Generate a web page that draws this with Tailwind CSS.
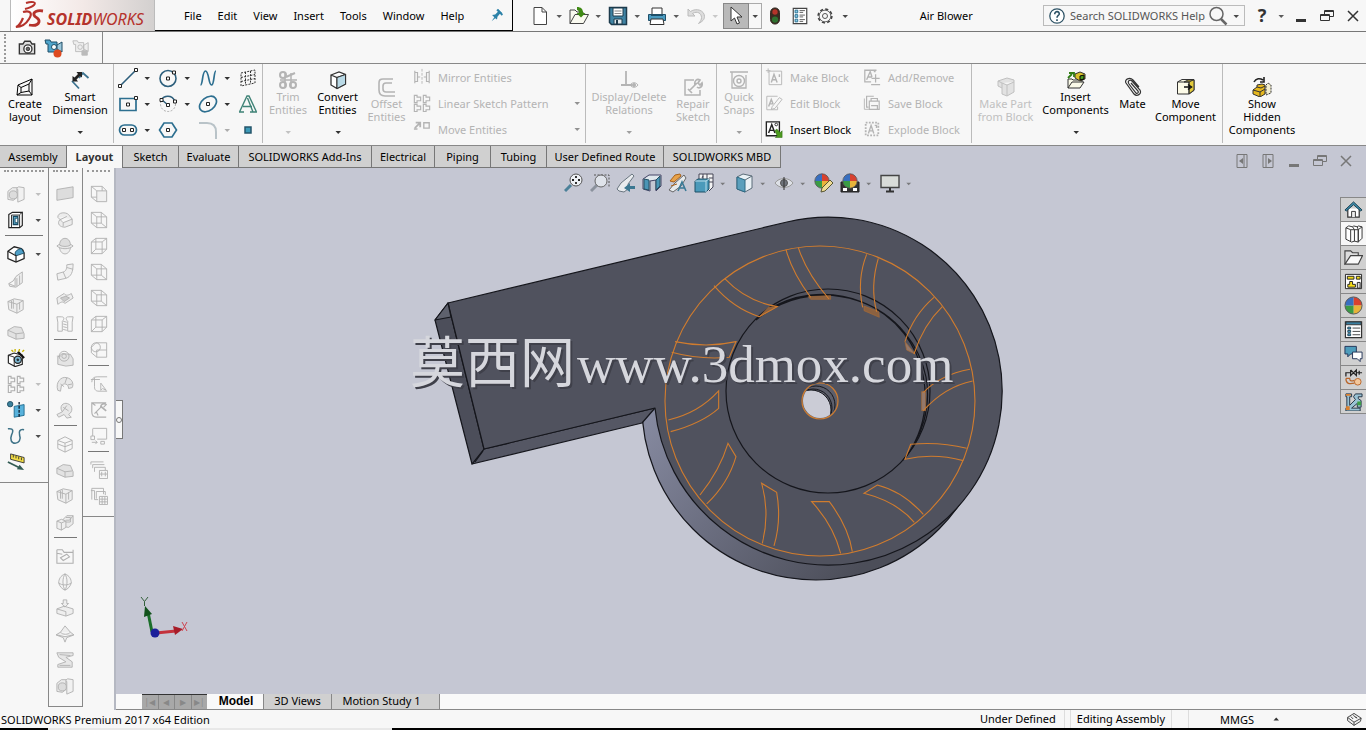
<!DOCTYPE html>
<html lang="en">
<head>
    <meta charset="UTF-8">
    <meta name="viewport" content="width=device-width, initial-scale=1.0">
    <title>Air Blower - SOLIDWORKS</title>
    <script src="https://cdn.jsdelivr.net/npm/@tailwindcss/browser@4"></script>
</head>

<body class="flex h-screen flex-col overflow-hidden bg-[#f7f7f7] font-['Noto_Sans','Open_Sans',sans-serif] text-[11px] leading-[13px] text-[#1c1c1c]">

<!-- icon sprite, every symbol is 20x20 -->
<svg class="hidden">
    <defs>
        <radialGradient id="g-ball"><stop offset="0" stop-color="#fff"/><stop offset="1" stop-color="#fff" stop-opacity="0"/></radialGradient>
    </defs>
    <symbol id="down" viewBox="0 0 8 8"><path d="M1.500 3h5.500L4.200 6z" fill="currentColor" fill-opacity=".8" stroke="none"/></symbol>
    <symbol id="up" viewBox="0 0 8 8"><path d="M1.500 5.500h5.500L4.200 2.500z" fill="currentColor" fill-opacity=".8" stroke="none"/></symbol>
    <symbol id="pin" viewBox="0 0 20 20"><path d="M11 3l5 5-2 1-1 0-2.500 3-.5 3-2-1.500L4 17l3-4.500L4.500 10l3.500-.5 3-3z" fill="#2c82a8" stroke="none"/><path d="M10 4l6 6" stroke="#2c82a8" stroke-width="2"/></symbol>
    <symbol id="new" viewBox="0 0 20 20"><path d="M4 1.500h8l4.500 4.500v12.500H4z" fill="#fff" stroke="#444"/><path d="M12 1.500V6h4.500" stroke="#444"/></symbol>
    <symbol id="open" viewBox="0 0 20 20"><path d="M1 17.500V4h5l2 2h6v3M1 17.500l5-9h13.500l-5 9z" fill="#fafaf0" stroke="#444"/><path d="M8 1c4 0 6 2 6 6h2.500L12 11.500 7.500 7H10c0-2-1-3-2-3z" fill="#3f8a14" stroke="none"/></symbol>
    <symbol id="save" viewBox="0 0 20 20"><path d="M1.500 1.500h17v17h-15l-2-2z" fill="#3f83a3" stroke="#1d3b4c" stroke-width="1.500"/><path d="M5 2h10v8H5z" fill="#fff" stroke="#1d3b4c"/><path d="M6.500 5h7M6.500 7.500h7" stroke="#888"/><path d="M6 13h8v5H6z" fill="#dfe8ec" stroke="#1d3b4c"/><path d="M8 14h2v4H8z" fill="#1d3b4c" stroke="none"/></symbol>
    <symbol id="print" viewBox="0 0 20 20"><path d="M5 2h10v7H5z" fill="#fff" stroke="#333"/><path d="M1.500 8.500h17v6h-17z" fill="#4b9bc0" stroke="#1f4f68"/><path d="M4 8h12v2H4z" fill="#1f4f68" stroke="none"/><path d="M4 13h12l1 5.500H3z" fill="#fff" stroke="#333"/></symbol>
    <symbol id="undo" viewBox="0 0 20 20"><path d="M2 3v7h7L6.500 7.500c5-3 9 0 9 4 0 2-1 4-3 6 4-2 6-4 6-7 0-6-8-9-14-5z" fill="#ddd" stroke="#bbb"/></symbol>
    <symbol id="cursor" viewBox="0 0 20 20"><path d="M5 1v14l3.500-3 2.500 6 2.500-1-2.500-6H16z" fill="#fff" stroke="#333"/></symbol>
    <symbol id="traffic" viewBox="0 0 20 20"><rect x="5" y="1" width="10" height="18" rx="5" fill="#3b2a20" stroke="#2a2018"/><circle cx="10" cy="5.500" r="3" fill="#b5342a" stroke="none"/><circle cx="10" cy="14" r="3.500" fill="#2f7230" stroke="none"/></symbol>
    <symbol id="list" viewBox="0 0 20 20"><path d="M2.500 1.500h15v17h-15z" fill="#fff" stroke="#444" stroke-width="1.300"/><path d="M9.500 4h6M9.500 6h4M9.500 9h6M9.500 11h4M9.500 14h6M9.500 16h4" stroke="#555"/><path d="M4.500 3.500h3v3h-3zM4.500 8.500h3v3h-3zM4.500 13.500h3v3h-3z" fill="#8fd0ea" stroke="#1f6a8c"/></symbol>
    <symbol id="gear" viewBox="0 0 20 20"><circle cx="10" cy="10" r="7.500" stroke="#444" stroke-dasharray="3.400 2.500" stroke-width="2"/><circle cx="10" cy="10" r="6.500" fill="#f7f7f7" stroke="#555"/><circle cx="10" cy="10" r="2.800" stroke="#444"/></symbol>
    <symbol id="help" viewBox="0 0 20 20"><circle cx="10" cy="10" r="8" fill="#fff" stroke="#2d5265" stroke-width="1.400"/><path d="M7.500 8c0-4 5.500-3.500 5 0-.3 1.500-2.500 1.500-2.500 4M10 13.500v2" stroke="#2d5265" stroke-width="1.800"/></symbol>
    <symbol id="search" viewBox="0 0 20 20"><circle cx="8.500" cy="8" r="6.500" stroke="#666" stroke-width="1.500"/><path d="M13 13l5.500 5.500" stroke="#666" stroke-width="2.500"/></symbol>
    <symbol id="minimise" viewBox="0 0 20 20"><path d="M5 14.500h10" stroke-width="3"/></symbol>
    <symbol id="restore" viewBox="0 0 20 20"><path d="M3.500 8.500h9v6h-9zM7.500 8V4.500h9v6H13M3.500 9.500h9M7.500 5.500h9"/></symbol>
    <symbol id="close" viewBox="0 0 20 20"><path d="M5 5l10 10M15 5L5 15" stroke-width="1.500"/></symbol>
    <symbol id="camera" viewBox="0 0 20 20"><path d="M1.500 5.500h4l2-3h6l2 3h3v11h-17z" fill="#ddd" stroke="#333" stroke-width="1.500"/><circle cx="11" cy="11" r="4.500" fill="#fff" stroke="#333" stroke-width="1.500"/><circle cx="11" cy="11" r="2" fill="#666" stroke="#333"/></symbol>
    <symbol id="record" viewBox="0 0 20 20"><path d="M1 2h5l1 2h6v10H4V6H2z" fill="#4fa5cc" stroke="#1e4d66"/><path d="M13 7l5-3v10l-5-3z" fill="#9cc8dc" stroke="#1e4d66"/><circle cx="10" cy="9" r="2.500" fill="#fff" stroke="#1e4d66"/><circle cx="13.500" cy="15.500" r="4" fill="#dd4a20" stroke="none"/></symbol>
    <symbol id="stop" viewBox="0 0 20 20"><path d="M1 2h5l1 2h6v10H4V6H2zM13 7l5-3v10l-5-3z" fill="#eee"/><circle cx="9" cy="9" r="2.500"/><path d="M11 13h6v5h-6z" fill="currentColor"/></symbol>

    <!-- ribbon -->
    <symbol id="layout" viewBox="0 0 20 20"><path d="M3 8l14-6v16H2zM6 10.500L14 7v7l-8 1.500zM3 8l3 2.500M17 2l-3 5M17 18l-3-4M2 18l4-2.500"/></symbol>
    <symbol id="dimension" viewBox="0 0 20 20"><path d="M9 8l4-5 5.500 5M2 11l7 7.500" stroke="#3c7390" stroke-width="1.800"/><path d="M2.500 11.500V6l2 1.500L8 4 6.500 2H12v5.500L10 6l-3.500 3.500L8 11.500z" fill="#222" stroke="none"/></symbol>
    <symbol id="line" viewBox="0 0 20 20"><path d="M3 17L17 3" stroke="#2d5f7c" stroke-width="1.600"/><path d="M.5 16.500h3v3h-3zM16.500.5h3v3h-3z" fill="#fff" stroke="#222"/></symbol>
    <symbol id="circle" viewBox="0 0 20 20"><circle cx="10" cy="10.500" r="8" stroke="#2d5f7c" stroke-width="1.600"/><path d="M8.500 9h3v3h-3zM14.500 3h3v3h-3z" fill="#fff" stroke="#222"/></symbol>
    <symbol id="spline" viewBox="0 0 20 20"><path d="M2.500 17C5 17 4 3 7.500 3s3 14 6 14 2-14 4.500-14" stroke="#2d6f90" stroke-width="1.700"/></symbol>
    <symbol id="grid" viewBox="0 0 20 20"><path d="M3 5l14-3v13L3 18zM7.500 4v13M12.500 3v13M3 9.500l14-3M3 13.500l14-3" stroke="#333" stroke-dasharray="2 1.200"/></symbol>
    <symbol id="rect" viewBox="0 0 20 20"><path d="M2 4.500h16v12H2z" stroke="#2d6f90" stroke-width="1.700"/><path d="M8.500 9h3v3h-3zM16.500 2.500h3v3h-3z" fill="#fff" stroke="#222"/></symbol>
    <symbol id="arc" viewBox="0 0 20 20"><circle cx="10" cy="10" r="7.500" stroke="#aaa" stroke-dasharray="2 1.500"/><path d="M3.500 6C6 1 14 1 16.500 6.500M4 6l6 5" stroke="#2d5f7c" stroke-width="1.500"/><path d="M2 4.500h3v3H2zM15.500 6h3v3h-3zM8.500 9.500h3v3h-3z" fill="#fff" stroke="#222"/></symbol>
    <symbol id="ellipse" viewBox="0 0 20 20"><ellipse cx="10" cy="10" rx="9.500" ry="6.500" transform="rotate(-38 10 10)" stroke="#2d6f90" stroke-width="1.700"/><path d="M8.500 8.500h3v3h-3z" fill="#fff" stroke="#222"/></symbol>
    <symbol id="sketchtext" viewBox="0 0 20 20"><path d="M1.500 18L9 2h2l7.500 16M1 18h5M12 18h7M5 12.500h9M9.500 4L15 18" stroke="#3f8377" stroke-width="1.400"/></symbol>
    <symbol id="slot" viewBox="0 0 20 20"><rect x="1.500" y="5" width="17" height="10" rx="5" stroke="#2d6f90" stroke-width="1.700"/><path d="M4.500 8.500h3v3h-3zM12.500 8.500h3v3h-3z" fill="#fff" stroke="#222"/></symbol>
    <symbol id="polygon" viewBox="0 0 20 20"><path d="M6 3h8l4.500 7-4.500 7H6l-4.500-7z" stroke="#2d6f90" stroke-width="1.700"/><path d="M8.500 8.500h3v3h-3z" fill="#fff" stroke="#222"/></symbol>
    <symbol id="fillet" viewBox="0 0 20 20"><path d="M1 3h8c6 0 9 3 9 9v7" stroke="#b9c3c8" stroke-width="2"/></symbol>
    <symbol id="point" viewBox="0 0 20 20"><path d="M7 7h6v6H7z" fill="#3c9ab8" stroke="#24566b" stroke-width="1.500"/></symbol>
    <symbol id="trim" viewBox="0 0 20 20"><path d="M7 3v14M13 3v14M2 10h17" stroke-width="1.500"/><circle cx="5" cy="5" r="3" stroke-width="2"/><circle cx="5" cy="15" r="3" stroke-width="2"/><circle cx="15" cy="15" r="3" stroke-width="2"/><path d="M8 7l9-4" stroke-width="2"/></symbol>
    <symbol id="convert" viewBox="0 0 20 20"><path d="M3 5l8-3 6.500 2.500V14L9 18.500 3 15zM3 5l6 2.500L17.500 4.500M9 7.500v11" fill="#fff" stroke="#333" stroke-width="1.300"/><path d="M9 7.500l8.500-3V14L9 18.500z" fill="#b9d9e6" stroke="#333"/></symbol>
    <symbol id="offset" viewBox="0 0 20 20"><path d="M16 2H6C3 2 2 3 2 6v7c0 4 2 6 6 6h10M15 6h-6c-2 0-3 1-3 3v3c0 2 1 3 3 3h9" stroke-width="1.600"/></symbol>
    <symbol id="mirror" viewBox="0 0 20 20"><path d="M10 1v18" stroke-dasharray="3 1.500"/><path d="M2 3v14M2 5h3v10H2M5 10h3M18 3v14M18 5h-3v10h3M15 10h-3" stroke-width="1.300"/></symbol>
    <symbol id="pattern" viewBox="0 0 20 20"><path d="M1.500 1.500h3v2h4v4h-4v2h-3zM11.500 1.500h3v2h4v4h-4v2h-3zM1.500 11.500h3v2h4v4h-4v2h-3zM11.500 11.500h3v2h4v4h-4v2h-3z" stroke-width="1.300"/></symbol>
    <symbol id="move" viewBox="0 0 20 20"><path d="M2 9l6-6M3 3h5v5" stroke-width="2"/><path d="M12 3h6v6h-6zM1 10h4" stroke-width="1.500"/></symbol>
    <symbol id="relations" viewBox="0 0 20 20"><path d="M7 1v14M2 15h11" stroke-width="1.800"/><path d="M11 15c2-3 6-3 8 0-2 3-6 3-8 0z"/><circle cx="15" cy="15" r="1.500" fill="currentColor"/></symbol>
    <symbol id="repair" viewBox="0 0 20 20"><path d="M11 3H2v15h15v-5" stroke-width="1.500"/><path d="M6 14l8-8M12 8c-1-4 2-7 5-5l-2 3 2 2 2-2c1 4-3 6-5 4M5 12l4 4" stroke-width="1.700"/></symbol>
    <symbol id="snaps" viewBox="0 0 20 20"><path d="M1 2h18M3 2v16h14V5" stroke-width="1.300"/><circle cx="10" cy="11" r="5.500" stroke-width="1.400"/><circle cx="10" cy="11" r="2" stroke-width="1.400"/></symbol>
    <symbol id="blockA" viewBox="0 0 20 20"><path d="M4.500 3.500h14v15h-14zM1 3h5M3.500 .5v5"/><path d="M7 16l3-9 3.500 9M8 13h4.500M16 7v3" stroke-width="1.600"/></symbol>
    <symbol id="blockEdit" viewBox="0 0 20 20"><path d="M14 2.500H2v15h12V14M8 14l8-10 3 2-8 10-4 1z"/><path d="M4 14l3-8 2 5M5 11h4" stroke-width="1.600"/></symbol>
    <symbol id="blockInsert" viewBox="0 0 20 20"><path d="M1.500 2h14.500v15.500H1.500z" fill="#fff" stroke="#222" stroke-width="1.500"/><path d="M4 14.500L7.500 5l3.500 9.500M5 11.500h5" stroke="#222" stroke-width="1.600"/><circle cx="12.500" cy="5" r="1.500" stroke="#222"/><path d="M11 12l2-2 4 4 2-2v7.500h-7.500l2-2z" fill="#4c9a1e" stroke="#2f6a12" stroke-width=".6"/></symbol>
    <symbol id="blockAdd" viewBox="0 0 20 20"><path d="M15 2.500H2v13h7M14 7v9M9.500 11.500h9M9 18.500h10" stroke-width="1.400"/><path d="M4 13l4-9 2 6M5.500 10H10M12 4h2" stroke-width="1.500"/></symbol>
    <symbol id="blockSave" viewBox="0 0 20 20"><path d="M12 2.500H4v12h2M7 8h11v9H7zM9 8V5h7v3M9 13h7v4" stroke-width="1.300"/><path d="M1.500 5v12h5"/></symbol>
    <symbol id="blockExplode" viewBox="0 0 20 20"><path d="M3 3h14v14H3z" stroke-dasharray="2 1.500" stroke-width="2"/><path d="M6 15l3-9 3 9M7 12h4M13 6h2v3" stroke-width="1.500"/></symbol>
    <symbol id="makepart" viewBox="0 0 20 20"><path d="M2 4l9-3 7 2v12l-7 4-5-2v-6L2 9zM6 6l5 2 7-3M11 8v11M2 4l4 2v5" fill="#e2e2e2"/></symbol>
    <symbol id="insertcomp" viewBox="0 0 20 20"><path d="M2 18V9h4l1 1h9v2M2 18l4-6h12l-4 6z" fill="#fafae8" stroke="#333"/><path d="M9 4l5-2 5 2v5l-5 2-5-3z" fill="#d9bf2c" stroke="#333"/><path d="M14 6l4-1v4l-4 1z" fill="#4c9a1e"/><path d="M2 8l4-4M3 3h5v4" stroke="#2f7d14" stroke-width="1.800"/></symbol>
    <symbol id="mate" viewBox="0 0 20 20"><path d="M16 10L10 3C7 0 1 2 3 6l8 11c3 3 8 0 6-4L9 4C7 2 4 4 6 7l7 9c1 1 3 0 2-2L8 6" stroke="#333" stroke-width="1.200"/></symbol>
    <symbol id="movecomp" viewBox="0 0 20 20"><path d="M1.500 5L6 2.500h12v11L13 17H1.500z" fill="#fdfbe8" stroke="#333"/><path d="M8 5l4-2h6v10l-5 4V5z" fill="#e3cb3c" stroke="#333"/><path d="M1.500 5H13v12M13 5l5-2.500" stroke="#333"/><path d="M8 10h6M12 7.500l3.500 2.500-3.500 2.500" stroke="#111" stroke-width="1.500"/></symbol>
    <symbol id="showhidden" viewBox="0 0 20 20"><path d="M1 13l4-3V8l5-1 3 1v9l-5 3-7-3z" fill="#e6b81e" stroke="#333"/><path d="M1 13l7 2 5-3M8 15v5M5 10l4 1 4-2" stroke="#333"/><path d="M14 8l2-2 3 2v8l-5 2z" fill="#f2eecf" stroke="#333" stroke-dasharray="2 1"/><path d="M2 5c2-4 6-4 9-2M12 0v5H8" stroke="#222" stroke-width="1.600"/></symbol>

    <!-- side bars -->
    <symbol id="boxround" viewBox="0 0 20 20"><path d="M10 4l3-2 6 1v13l-7 3V5z" fill="#f1f1f1"/><path d="M1 7l5-4h5v11l-4 3-6-1z" fill="#ebebeb"/><circle cx="7" cy="11" r="4.500" fill="#dcdcdc"/></symbol>
    <symbol id="cutbox" viewBox="0 0 20 20"><path d="M2 4l4-2.500h11V16l-3 2.500H2z" fill="#fff" stroke="#222" stroke-width="1.300"/><path d="M5 4.500h9v14M14 4l3-2.500M5 4.500V18" stroke="#222"/><path d="M7 6h5v9H7z" fill="#5fb1d6" stroke="#17475e" stroke-width="1.400"/><path d="M9 8h3v5H9z" fill="#fff" stroke="#17475e"/></symbol>
    <symbol id="filletbox" viewBox="0 0 20 20"><path d="M1 7l7-5 8 2c2 1 2.500 3 3 5v6L10 19l-9-4z" fill="#fff" stroke="#222" stroke-width="1.400"/><path d="M9 10c0-3 2-5 7-6l3 5-9 3z" fill="#4fa0c8" stroke="#17475e"/><path d="M1 7l9 5v7" stroke="#222" stroke-width="1.300"/></symbol>
    <symbol id="rib" viewBox="0 0 20 20"><path d="M2 14l5-3 3-5 7-5v12l-7 5-7-1zM11 8v9M14 5v10M2 14l7 3V8" fill="#eee"/></symbol>
    <symbol id="draft" viewBox="0 0 20 20"><path d="M1 5l7-3 10 2v10l-7 4-9-4zM1 5l10 3v10M11 8l7-4M7 3v10M14 6v8M5 4v9" fill="#eee"/></symbol>
    <symbol id="shell" viewBox="0 0 20 20"><path d="M1 8l7-4 8 1 3 7v5l-9 1-9-4zM1 8l9 4v6M10 12l8-1" fill="#e2e2e2"/></symbol>
    <symbol id="wizard" viewBox="0 0 20 20"><path d="M1.500 7L8 4.500l9 2.500v10l-8 2.500-7.500-4z" fill="#fff" stroke="#222" stroke-width="1.300"/><path d="M1.500 7L8 9v10" stroke="#222"/><circle cx="12" cy="12" r="4" fill="#7cb7d2" stroke="#222" stroke-width="1.300"/><circle cx="12" cy="12" r="1" fill="#234"/><path d="M12 3l7 7" stroke="#111" stroke-width="2.500"/><path d="M5 1l2 2M9 0v3M14 0l-1 3M17 3l2-2" stroke="#c8b400" stroke-width="1.500"/></symbol>
    <symbol id="plane" viewBox="0 0 20 20"><circle cx="3.500" cy="3.500" r="3" fill="#3c819c" stroke="#1e4d62"/><path d="M8 6l11-2v12L8 18z" fill="#58b2dc" stroke="#1e6a8c"/><path d="M13.500 1v18" stroke="#123" stroke-dasharray="3 1.500" stroke-width="1.500"/></symbol>
    <symbol id="curve" viewBox="0 0 20 20"><path d="M1 2c7-1 6 3 4 7-2 5 0 9 4 9s7-4 5-9c-1-4 0-7 5-6" stroke="#3f7388" stroke-width="1.700"/></symbol>
    <symbol id="instant" viewBox="0 0 20 20"><path d="M4 1l15 4v6L4 7z" fill="#f3dd45" stroke="#333"/><path d="M7 2v3M10 3v3M13 4v3M16 5v3" stroke="#333"/><path d="M1 10l14 7" stroke="#335c55" stroke-width="2"/><path d="M19 19l-8-1 3-5z" fill="#335c55" stroke="none"/></symbol>
    <symbol id="sheet" viewBox="0 0 20 20"><path d="M1 5l18-3v12L1 17z" fill="#ddd"/></symbol>
    <symbol id="tube" viewBox="0 0 20 20"><path d="M2 7c0-6 9-6 12-3l4 5v6l-8 3c-6 0-9-4-6-8l8-4M2 7l6 6 10-4M8 13v4" fill="#ececec"/></symbol>
    <symbol id="dome" viewBox="0 0 20 20"><path d="M4 12c1 9 11 9 12 0" fill="#eee"/><path d="M1 10c4-4 14-4 18 0-4 4-14 4-18 0z" fill="#e8e8e8"/><path d="M4 9c0-10 12-10 12 0-3 2-9 2-12 0z" fill="#ddd"/></symbol>
    <symbol id="globe" viewBox="0 0 20 20"><path d="M10 1c5 2 7 6 7 10-1 4-4 7-7 8-3-1-6-4-7-8 0-4 2-8 7-10zM3 11c4 3 10 3 14 0M10 1c-3 5-3 13 0 18M10 1c3 5 3 13 0 18" fill="#f2f2f2"/></symbol>
    <symbol id="disc" viewBox="0 0 20 20"><path d="M10 1l6 7 4 3-8 3-2 5-2-5-8-3 5-3zM5 8c2 3 9 3 11 0M1 11l9 2 9-2" fill="#eee"/></symbol>
    <symbol id="bend" viewBox="0 0 20 20"><path d="M1 12l7-2c3-1 4-3 4-8l7-1c0 9-2 14-8 16l-9 2zM8 10l3 7M12 5l7 2" fill="#f0f0f0"/></symbol>
    <symbol id="loft" viewBox="0 0 20 20"><path d="M1 10l8-5c2 3 5 2 8 0l2 5-9 6c-3-3-5-1-8 1z" fill="#eee"/><path d="M5 10l6-2 4 2-6 4z" fill="#ccc"/></symbol>
    <symbol id="zip" viewBox="0 0 20 20"><path d="M1 2h5c4 0 3 3 1 5v11H2V8zM19 2h-5c-4 0-3 3-1 5v11h5V8zM8 7l4 1M8 10l4 1M8 13l4 1M8 16l4 1"/></symbol>
    <symbol id="wheel" viewBox="0 0 20 20"><path d="M1 8h4M2 17V9l5-4 9 1 3 5v7l-8 1-9-2z" fill="#e4e4e4"/><circle cx="9" cy="8" r="5.500"/><circle cx="9" cy="8" r="2.500"/></symbol>
    <symbol id="swirl" viewBox="0 0 20 20"><path d="M2 17c-3-9 4-16 10-14 6 1 8 7 6 11l-4 1c0-5-5-7-8-3l-1 6zM5 10l4 3M12 3l-2 6M18 10l-5 1" fill="#e8e8e8"/></symbol>
    <symbol id="knot" viewBox="0 0 20 20"><path d="M1 15l6-3c-4-6 1-11 6-9 6 2 6 9 1 12l3 3-5 1-3-4-6 3zM8 7l6 4M12 5l-5 7" fill="#e8e8e8"/></symbol>
    <symbol id="hex" viewBox="0 0 20 20"><path d="M2 6l8-4 8 4v9l-8 4-8-4zM2 6l8 3 8-3M2 10l8 3 8-3M10 9v10"/></symbol>
    <symbol id="halves" viewBox="0 0 20 20"><path d="M8 7l4-4 7 0v9l-5 4-6-1z" fill="#eaeaea"/><path d="M1 9l5-2 5 2v7l-5 3-5-2zM1 9l5 2v8M6 11l5-2M11 8h4l4-5M11 5h5v5h-5" fill="#efefef"/></symbol>
    <symbol id="folder" viewBox="0 0 20 20"><path d="M1 3h6l2 3h10V3M19 6v12H1V3M5 12l7-4 3 3-7 4zM1 7l6 1" stroke-width="1.200"/></symbol>
    <symbol id="press" viewBox="0 0 20 20"><path d="M1 11l8-3 10 3v5l-8 3-10-3zM1 11l10 3v5M8 1h4v4h2l-4 4-4-4h2z" fill="#eee"/></symbol>
    <symbol id="spring" viewBox="0 0 20 20"><path d="M1 2h18v3l-8 2 7 5v6H2v-3l9-3-8-5zM4 4l12 1M4 16h12" fill="#e7e7e7"/></symbol>
    <symbol id="cubeA" viewBox="0 0 20 20"><path d="M1.500 1.500h12v12h-12zM1.500 1.500l6 5M13.500 1.500l5 5M1.500 13.500l6 5"/><path d="M7.500 6.500h11v12h-11z" fill="#f0f0f0"/></symbol>
    <symbol id="cubeB" viewBox="0 0 20 20"><path d="M1.500 1.500h11v12h-11zM7.500 6.500h11v12h-11zM1.500 1.500l6 5M12.500 1.500l6 5M1.500 13.500l6 5M12.500 13.500l6 5"/></symbol>
    <symbol id="cubeC" viewBox="0 0 20 20"><path d="M1.500 5.500h12v13h-12zM6.500 1.500h12v12h-12zM1.500 5.500l5-4M13.500 5.500l5-4M1.500 18.500l5-5M13.500 18.500l5-5"/></symbol>
    <symbol id="cubeD" viewBox="0 0 20 20"><path d="M1.500 13V7l5-5h12v16h-11v-8h11M1.500 13l6 5"/><circle cx="6.500" cy="7" r="5"/></symbol>
    <symbol id="sk1" viewBox="0 0 20 20"><path d="M19 2H8C4 2 2 4 2 8M1 5h10M5 3v10c0 4 2 5 5 5h9M12 9v8l2-2 4 2z"/></symbol>
    <symbol id="sk2" viewBox="0 0 20 20"><path d="M18 2H2v10c0 4 2 6 5 6h11M2 2l4 3M5 14l8-8M12 8c-1-4 3-6 6-4l-3 3M7 12l2 4" stroke-width="1.300"/><path d="M12 6l6 5" stroke-width="2"/></symbol>
    <symbol id="sk3" viewBox="0 0 20 20"><path d="M3 1.500h15.500v12H8M3 2v8M1 10h4v4H1zM2 17h6M6 15l2 2-2 2M12 16h4v3h-4z"/></symbol>
    <symbol id="sk4" viewBox="0 0 20 20"><path d="M1 4V1h14M3 8V4h13M5 12V7h12v3M10.500 10.500h9v9h-9zM13 12v5M17 12v5M11 14.500h8"/></symbol>
    <symbol id="sk5" viewBox="0 0 20 20"><path d="M2 14V1.500h13V8M1 4h4v10h4M7 5h10v4M7 5v8M10.500 10.500h9v9h-9zM13.500 11v8M16.500 11v8M11 13.500h8M11 16.500h8"/></symbol>

    <!-- view toolbar -->
    <symbol id="zoomfit" viewBox="0 0 20 20"><path d="M1 18l6-6" stroke="#4c8199" stroke-width="3"/><circle cx="12" cy="7" r="6" fill="#eef1f5" stroke="#555"/><path d="M12 3v2M12 9v2M8 7h2M14 7h2" stroke="#222" stroke-width="1.800"/></symbol>
    <symbol id="zoomarea" viewBox="0 0 20 20"><path d="M4 2h15v13" stroke="#555" stroke-dasharray="2 1.500"/><path d="M1 18l6-6" stroke="#8b929d" stroke-width="3"/><circle cx="11" cy="8" r="6" fill="#dfe3ea" stroke="#666"/></symbol>
    <symbol id="prev" viewBox="0 0 20 20"><path d="M1 16l4-6 11-9 2 2-6 8 0 5-4 3-5-1z" fill="#e8ebee" stroke="#6a7680"/><path d="M19 13h-5v-3l-6 5 6 4v-3h5z" fill="#3b7791" stroke="none"/></symbol>
    <symbol id="section" viewBox="0 0 20 20"><path d="M1 6l6-4h12v11l-5 5V7L8 8v10l-7-2z" fill="#dfe7ec" stroke="#446"/><path d="M2 6l5 1v10l-5-1zM14 7l4-4v10l-4 4z" fill="#4a95b5" stroke="#264f63"/></symbol>
    <symbol id="dynview" viewBox="0 0 20 20"><path d="M1 17l6-7 9-8 2 3-5 8-8 6z" fill="#e6eaec" stroke="#666"/><path d="M2 8l5-6 5-1 1 2-7 6zM3 13l6-2" fill="#e7a24a" stroke="#a8621a"/><path d="M10 18l4-9 4 9M12 15h5" stroke="#3a7a96" stroke-width="1.600"/></symbol>
    <symbol id="orient" viewBox="0 0 20 20"><path d="M5 6V1h14v13l-4 4" fill="#f4f4f4" stroke="#445"/><path d="M9 1v5M9 3l-1 2M13 1v5M15 5h4M15 9h4" stroke="#445"/><path d="M1 8l3-2h11v10l-3 3H1z" fill="#4b9aba" stroke="#1f5167"/><path d="M1 8h11v11M12 8l3-2" stroke="#b9dbe8"/></symbol>
    <symbol id="display" viewBox="0 0 20 20"><path d="M3 4l6-3 9 2v12l-7 4-8-3z" fill="#e9f1f5" stroke="#5a6b78"/><path d="M3 4l8 3v12l-8-3z" fill="#5a9fbc" stroke="#2f6a84"/><path d="M11 7l7-4" stroke="#5a6b78"/></symbol>
    <symbol id="eye" viewBox="0 0 20 20"><path d="M1 10c4-6 14-6 18 0-4 6-14 6-18 0z" fill="#dde0e6" stroke="#999"/><circle cx="10" cy="10" r="3.500" fill="#70757d" stroke="#555"/><path d="M10 4v13" stroke="#333"/></symbol>
    <symbol id="ball" viewBox="0 0 20 20"><path d="M10 10V1a9 9 0 0 1 9 9z" fill="#d8412f" stroke="none"/><path d="M10 10h9a9 9 0 0 1-9 9z" fill="#e8b33a" stroke="none"/><path d="M10 10v9a9 9 0 0 1-9-9z" fill="#3b9c45" stroke="none"/><path d="M10 10H1a9 9 0 0 1 9-9z" fill="#386fc0" stroke="none"/><circle cx="10" cy="10" r="9" stroke="#555"/><circle cx="7" cy="6" r="5" fill="url(#g-ball)" stroke="none"/></symbol>
    <symbol id="appearance" viewBox="0 0 20 20"><use href="#ball" width="16" height="16"/><path d="M7 19l1-4 8-8 3 3-8 8z" fill="#f0dc95" stroke="#553"/></symbol>
    <symbol id="scene" viewBox="0 0 20 20"><path d="M1 9h18v10H1z" fill="#333" stroke="#222"/><path d="M3 15h4v3H3zM13 15h4v3h-4z" fill="#fff" stroke="none"/><use href="#ball" x="2" width="16" height="16"/></symbol>
    <symbol id="monitor" viewBox="0 0 20 20"><path d="M1 2.500h18v12H1z" fill="#d9dcd9" stroke="#444" stroke-width="1.400"/><path d="M10 15v3M6 18.500h8" stroke="#333" stroke-width="2"/></symbol>
    <symbol id="paneL" viewBox="0 0 20 20"><path d="M5 3.500h10v13H5zM12 4v12"/><path d="M11 7v6l-4-3z" fill="currentColor" stroke="none"/></symbol>
    <symbol id="paneR" viewBox="0 0 20 20"><path d="M5 3.500h10v13H5zM8 4v12"/><path d="M10 7v6l4-3z" fill="currentColor" stroke="none"/></symbol>

    <!-- task pane -->
    <symbol id="home" viewBox="0 0 20 20"><path d="M4 9v9h12V9" fill="#fff" stroke="#333" stroke-width="1.300"/><path d="M8 18v-6h4v6" fill="#eee" stroke="#333"/><path d="M1 10.500L10 2l9 8.500-1.500 1L10 5l-7.500 6.500z" fill="#3c8aa8" stroke="#193f50"/></symbol>
    <symbol id="library" viewBox="0 0 20 20"><path d="M12 5l3-3 4 1v12l-4 4-3-2z" fill="#fff" stroke="#333"/><path d="M7 5l3-3 4 1 1 3v13l-4-1-4-1z" fill="#fff" stroke="#333"/><path d="M2 4l3-2 4 1 2 3v12l-3 1-6-3z" fill="#fff" stroke="#333"/><path d="M2 4l5 2v12M7 6h4M11 6h4v12M15 6l4-3" stroke="#333"/></symbol>
    <symbol id="explorer" viewBox="0 0 20 20"><path d="M1 17V3h6l2 2h6v3" fill="#ddd" stroke="#444" stroke-width="1.200"/><path d="M1 17l6-9h12.500L15 17z" fill="#fafafa" stroke="#444" stroke-width="1.200"/></symbol>
    <symbol id="palette" viewBox="0 0 20 20"><path d="M1.500 2.500h17v15h-17z" fill="#fff" stroke="#222"/><path d="M3.500 4.500h7v3h-7zM13 4.500h4v3h-4zM6 10h3v3h3v3H4v-3h2z" fill="#f5dc18" stroke="#222"/><path d="M14 11h3v6h-3z" fill="#ddd" stroke="#222"/></symbol>
    <symbol id="props" viewBox="0 0 20 20"><path d="M1.500 2h17v16.500h-17z" fill="#fff" stroke="#333" stroke-width="1.300"/><path d="M2 2h16v3H2z" fill="#3a7fa0" stroke="#333"/><path d="M9 8.500h8M9 12h8M9 15.500h8" stroke="#444"/><path d="M4 7.500h3v2H4zM4 11h3v2H4zM4 14.500h3v2H4z" fill="#4ba3cc" stroke="#245"/></symbol>
    <symbol id="forum" viewBox="0 0 20 20"><path d="M1 2.500h12v8H7l-3 3v-3H1z" fill="#4f9dbb" stroke="#235"/><path d="M9 8.500h10v7h-2v3l-3-3H9z" fill="#fff" stroke="#235"/></symbol>
    <symbol id="costing" viewBox="0 0 20 20"><path d="M2 9V5h5M7 2v6l6-6v6L7 2M13 5h6M16 3v4" stroke="#222" stroke-width="1.300"/><path d="M2 11c0 6 4 6 9 5M2 11h4c0 3 2 3 5 2" stroke="#b9662a" stroke-width="1.300"/><circle cx="14.500" cy="14.500" r="3.500" fill="#f3c79b" stroke="#b9662a"/></symbol>
    <symbol id="routing" viewBox="0 0 20 20"><path d="M2 2h6v3H6v9l6-6-2-3 2-3h7v3h-4v2l3 2v7h-4v-4l-6 5 9 0v3H2v-3h1V5H2z" fill="#9ac3d4" stroke="#234"/><path d="M2 2h5v2H2zM2 15h4v4H2z" fill="#d8802e" stroke="none"/><path d="M14 10h4v4h-4z" fill="#3b9c45" stroke="none"/></symbol>
    <symbol id="tag" viewBox="0 0 20 20"><path d="M2 8l8-5 9 6-1 4-8 5-8-6zM2 8l8 6 9-5M10 14v4M6 7l3 3M9 5l4 4M12 7l2 2" fill="#eee" stroke="#444" stroke-width="1.200"/></symbol>
</svg>

<!-- title bar -->
<header class="flex h-8 shrink-0 border-b border-[#777]">
    <div class="ml-[10px] flex w-[145px] items-center border-x border-[#bbb] bg-linear-to-r from-white via-[#f3e9e7] to-[#d3d0cf] pl-1 whitespace-nowrap">
        <svg class="h-8 w-8 shrink-0 fill-none stroke-[#b5322b]" viewBox="0 0 32 32">
            <path d="M11 3c6-2 11-1 8 2-2 2-5 3-9 4" stroke-width="2"/>
            <path d="M8 12c7-2 10 1 6 7-3 5-8 8-13 8 3-1 5-4 7-9" stroke-width="2.200"/>
            <path d="M28 11c-6-1-10 1-9 4s6 3 5 7c-1 3-5 4-10 3" stroke-width="2.800"/>
        </svg>
        <span class="pt-2 text-[16px] italic text-[#b5322b]"><b>SOLID</b>WORKS</span>
    </div>
    <nav class="flex items-center gap-4 border-b border-r border-black pl-[29px] text-black">
        <a href="#">File</a>
        <a href="#">Edit</a>
        <a href="#">View</a>
        <a href="#">Insert</a>
        <a href="#">Tools</a>
        <a href="#">Window</a>
        <a href="#">Help</a>
        <button class="mr-[6px] ml-2" aria-label="Pin menu"><svg class="size-[18px]"><use href="#pin"/></svg></button>
    </nav>
    <div class="flex items-center pl-[11px]" id="quick"></div>
    <h1 class="flex-1 text-center leading-8 text-black">Air Blower</h1>
    <form class="my-[5px] flex w-[202px] items-center border border-[#bbb] bg-[#f7f7f7] pl-1">
        <svg class="size-[18px] shrink-0 fill-none"><use href="#help"/></svg>
        <input class="ml-1 w-[138px] outline-none placeholder:text-[#555]" type="text" aria-label="Search help" placeholder="Search SOLIDWORKS Help">
        <button type="button" class="mr-1" aria-label="Search"><svg class="size-5 fill-none"><use href="#search"/></svg></button>
        <button type="button" aria-label="Search options"><svg class="size-2"><use href="#down"/></svg></button>
    </form>
    <div class="flex items-center text-[#333]">
        <button class="w-[34px] text-[18px] font-bold" aria-label="Help">?</button>
        <button class="mr-[3px] -ml-[2px]" aria-label="Help menu"><svg class="size-2"><use href="#down"/></svg></button>
        <button class="w-[26px]" aria-label="Minimise"><svg class="mx-auto size-5 fill-none stroke-current"><use href="#minimise"/></svg></button>
        <button class="w-[26px]" aria-label="Restore"><svg class="mx-auto size-5 fill-none stroke-current"><use href="#restore"/></svg></button>
        <button class="w-[26px]" aria-label="Close"><svg class="mx-auto size-5 fill-none stroke-current"><use href="#close"/></svg></button>
    </div>
</header>

<!-- capture toolbar -->
<div class="flex h-8 shrink-0 border-b border-[#888]">
    <div class="flex w-[103px] items-center gap-2 border-r border-[#888] pl-1 text-[#bbb]">
        <span class="mr-1 h-7 border-l-2 border-dotted border-[#999]"></span>
        <button aria-label="Image capture"><svg class="size-[18px] fill-none"><use href="#camera"/></svg></button>
        <button aria-label="Record video"><svg class="size-5 fill-none"><use href="#record"/></svg></button>
        <button aria-label="Stop record" disabled><svg class="size-[18px] fill-none stroke-current"><use href="#stop"/></svg></button>
    </div>
</div>

<!-- ribbon -->
<section class="flex h-[82px] shrink-0 border-b border-[#888] pb-[2px] text-center text-black [&_svg]:fill-none [&_svg]:stroke-current">
    <div class="flex w-[114px] border-r border-[#bbb]">
        <button class="flex w-[50px] flex-col items-center pt-[13px] whitespace-nowrap"><svg class="size-5"><use href="#layout"/></svg>Create<br>layout</button>
        <button class="flex w-[60px] flex-col items-center pt-[6px] whitespace-nowrap"><svg class="size-5"><use href="#dimension"/></svg>Smart<br>Dimension<svg class="mt-3 size-2"><use href="#down"/></svg></button>
    </div>
    <div class="grid w-[149px] grid-cols-[40px_40px_40px_20px] content-start border-r border-[#bbb] pl-1" id="sketch"></div>
    <div class="flex w-[323px] border-r border-[#bbb] text-[#b4b4b4]">
        <button class="flex w-[50px] flex-col items-center pt-[6px]" disabled><svg class="size-5"><use href="#trim"/></svg>Trim<br>Entities<svg class="mt-3 size-2"><use href="#down"/></svg></button>
        <button class="flex w-[49px] flex-col items-center pt-[6px] text-black"><svg class="size-5"><use href="#convert"/></svg>Convert<br>Entities<svg class="mt-3 size-2"><use href="#down"/></svg></button>
        <button class="flex w-[49px] flex-col items-center pt-[13px]" disabled><svg class="size-5"><use href="#offset"/></svg>Offset<br>Entities</button>
        <div class="flex flex-1 flex-col pr-1">
            <button class="flex h-[26px] items-center gap-[7px] pl-[2px]" disabled><svg class="size-[18px]"><use href="#mirror"/></svg>Mirror Entities</button>
            <button class="flex h-[26px] items-center gap-[7px] pl-[2px]" disabled><svg class="size-[18px]"><use href="#pattern"/></svg>Linear Sketch Pattern<svg class="ml-auto size-2 text-[#777]"><use href="#down"/></svg></button>
            <button class="flex h-[26px] items-center gap-[7px] pl-[2px]" disabled><svg class="size-[18px]"><use href="#move"/></svg>Move Entities<svg class="ml-auto size-2 text-[#777]"><use href="#down"/></svg></button>
        </div>
    </div>
    <div class="flex w-[131px] border-r border-[#bbb] text-[#b4b4b4]">
        <button class="flex w-[86px] flex-col items-center pt-[6px] whitespace-nowrap" disabled><svg class="size-5"><use href="#relations"/></svg>Display/Delete<br>Relations<svg class="mt-3 size-2 text-[#888]"><use href="#down"/></svg></button>
        <button class="flex w-[42px] flex-col items-center pt-[13px]" disabled><svg class="size-5"><use href="#repair"/></svg>Repair<br>Sketch</button>
    </div>
    <div class="w-[45px] border-r border-[#bbb] text-[#b4b4b4]">
        <button class="flex w-full flex-col items-center pt-[6px]" disabled><svg class="size-5"><use href="#snaps"/></svg>Quick<br>Snaps<svg class="mt-3 size-2 text-[#888]"><use href="#down"/></svg></button>
    </div>
    <div class="grid w-[210px] grid-cols-[98px_110px] content-start border-r border-[#bbb] pl-[3px] text-[#b4b4b4]">
        <button class="flex h-[26px] items-center gap-[7px] whitespace-nowrap" disabled><svg class="size-[18px]"><use href="#blockA"/></svg>Make Block</button>
        <button class="flex h-[26px] items-center gap-[7px] whitespace-nowrap" disabled><svg class="size-[18px]"><use href="#blockAdd"/></svg>Add/Remove</button>
        <button class="flex h-[26px] items-center gap-[7px] whitespace-nowrap" disabled><svg class="size-[18px]"><use href="#blockEdit"/></svg>Edit Block</button>
        <button class="flex h-[26px] items-center gap-[7px] whitespace-nowrap" disabled><svg class="size-[18px]"><use href="#blockSave"/></svg>Save Block</button>
        <button class="flex h-[26px] items-center gap-[7px] whitespace-nowrap text-black"><svg class="size-[18px]"><use href="#blockInsert"/></svg>Insert Block</button>
        <button class="flex h-[26px] items-center gap-[7px] whitespace-nowrap" disabled><svg class="size-[18px]"><use href="#blockExplode"/></svg>Explode Block</button>
    </div>
    <div class="flex w-[251px] border-r border-[#bbb]">
        <button class="flex w-[67px] flex-col items-center pt-[13px] whitespace-nowrap text-[#c0c0c0]" disabled><svg class="size-5"><use href="#makepart"/></svg>Make Part<br>from Block</button>
        <button class="flex w-[73px] flex-col items-center pt-[6px] whitespace-nowrap"><svg class="size-5"><use href="#insertcomp"/></svg>Insert<br>Components<svg class="mt-3 size-2"><use href="#down"/></svg></button>
        <button class="flex w-[41px] flex-col items-center pt-[13px] whitespace-nowrap"><svg class="size-5"><use href="#mate"/></svg>Mate</button>
        <button class="flex w-[65px] flex-col items-center pt-[13px] whitespace-nowrap"><svg class="size-5"><use href="#movecomp"/></svg>Move<br>Component</button>
    </div>
    <button class="flex w-[78px] flex-col items-center pt-[13px]"><svg class="size-5"><use href="#showhidden"/></svg>Show<br>Hidden<br>Components</button>
</section>

<!-- command manager tabs -->
<div class="flex h-[22px] shrink-0 justify-between bg-[#c5c7d3]">
    <nav class="flex bg-[#d0d0d0] text-center leading-[21px] whitespace-nowrap text-black">
        <a class="w-[67px] border-r border-b border-[#777]" href="#">Assembly</a>
        <a class="w-[55px] bg-[#f7f7f7] font-bold text-[#333]" href="#" aria-current="page">Layout</a>
        <a class="w-[57px] border-x border-b border-[#777]" href="#">Sketch</a>
        <a class="w-[60px] border-r border-b border-[#777]" href="#">Evaluate</a>
        <a class="w-[133px] border-r border-b border-[#777]" href="#">SOLIDWORKS Add-Ins</a>
        <a class="w-[63px] border-r border-b border-[#777]" href="#">Electrical</a>
        <a class="w-[56px] border-r border-b border-[#777]" href="#">Piping</a>
        <a class="w-[56px] border-r border-b border-[#777]" href="#">Tubing</a>
        <a class="w-[117px] border-r border-b border-[#777]" href="#">User Defined Route</a>
        <a class="w-[117px] border-r border-b border-[#777]" href="#">SOLIDWORKS MBD</a>
    </nav>
    <div class="flex items-center gap-[6px] pt-2 pr-[10px] text-[#777]">
        <button aria-label="Collapse left"><svg class="size-5 fill-none stroke-current"><use href="#paneL"/></svg></button>
        <button aria-label="Collapse right"><svg class="size-5 fill-none stroke-current"><use href="#paneR"/></svg></button>
        <button aria-label="Minimise document"><svg class="size-5 fill-none stroke-current"><use href="#minimise"/></svg></button>
        <button aria-label="Restore document"><svg class="size-5 fill-none stroke-current"><use href="#restore"/></svg></button>
        <button aria-label="Close document"><svg class="size-5 fill-none stroke-current"><use href="#close"/></svg></button>
    </div>
</div>

<main class="flex min-h-0 flex-1">
    <aside class="flex w-[116px] shrink-0 items-start border-r-2 border-[#b5b8c2]">
        <div class="mb-[3px] w-[49px] self-stretch border-r border-[#888]">
            <div class="border-b border-[#888] pb-[7px]" id="features"></div>
        </div>
        <div class="w-[34px] border-r border-b border-[#888] pb-[7px]" id="surfaces"></div>
        <div class="w-[31px] border-b border-[#888] pb-[7px]" id="views"></div>
    </aside>

    <div class="flex min-w-0 flex-1 flex-col">
        <div class="relative min-h-0 flex-1 bg-[#c5c7d3]">
            <!-- model: blower housing, impeller and watermark -->
            <svg class="absolute inset-0 h-full w-full fill-none" viewBox="116 168 1250 526">
                <defs>
                    <linearGradient id="side" x1="0" y1=".45" x2=".6" y2="1">
                        <stop offset="0" stop-color="#8b8fa6"/><stop offset=".5" stop-color="#6b6e80"/><stop offset="1" stop-color="#4c4e59"/>
                    </linearGradient>
                    <clipPath id="bore"><circle cx="820" cy="401" r="17"/></clipPath>
                </defs>
                <g stroke="#15161c" stroke-width="1.200" stroke-linejoin="round">
                    <circle cx="816" cy="406" r="174" fill="url(#side)"/>
                    <path d="M484 449L655 408L642 423L472 464z" fill="#555764"/>
                    <path d="M448 303L435 320L472 464L484 449z" fill="#4c4e5a"/>
                    <path d="M448 303L787 222A174 174 0 1 1 655 408L484 449z" fill="#50525e"/>
                    <path d="M448 303L435 320L451 317z" fill="#5e616d"/>
                    <path d="M475 462L483 451"/>
                    <circle cx="828" cy="391" r="102"/>
                    <path d="M756 320A104 102 0 0 1 926 377A100 100 0 0 1 903 460M766 311A102 99 0 0 1 923 375Q932 420 906 457"/>
                </g>
                <g transform="translate(640 200) scale(.3333)" stroke-width="3.300">
                    <g fill="#8b6140" stroke="#a86b36" stroke-width="2">
                        <path d="M505 290L572 287L572 298L512 298z"/>
                        <path d="M672 318L716 335L718 352L672 332z"/>
                        <path d="M795 425L825 462L800 450z" fill="#94786b"/>
                        <path d="M845 575L857 575L857 632L845 632z" fill="#94786b"/>
                        <path d="M358 350L412 320L385 322z"/>
                    </g>
                    <g stroke="#d07c2e">
                        <circle cx="540" cy="603" r="465"/>
                        <path d="M438 148Q455 215 512 292M475 143Q500 220 567 297"/>
                        <path d="M680 163Q650 240 668 322M715 175Q690 260 710 335"/>
                        <path d="M882 292Q820 345 795 425M907 320Q850 375 822 462"/>
                        <path d="M990 508Q900 525 850 578M998 543Q915 560 850 632"/>
                        <path d="M980 745Q900 725 812 733L795 778Q880 758 970 782"/>
                        <path d="M850 943Q790 875 712 855L672 880Q770 905 823 967"/>
                        <path d="M602 1060Q580 975 515 905L568 905Q625 980 637 1055"/>
                        <path d="M367 1030Q390 940 365 850L410 877Q425 960 402 1038"/>
                        <path d="M180 885Q240 810 264 730L288 770Q265 850 200 912"/>
                        <path d="M85 660Q175 640 236 573L236 625Q185 670 92 695"/>
                        <path d="M95 457Q180 480 268 472L288 425Q200 445 105 425"/>
                        <path d="M222 257Q280 325 358 350L412 320Q320 305 255 237"/>
                    </g>
                </g>
                <circle cx="820" cy="401" r="18" fill="#5d5f6b" stroke="#d07c2e" stroke-width="1.200"/>
                <g clip-path="url(#bore)" stroke="#15161c">
                    <circle cx="816" cy="405" r="19"/>
                    <circle cx="813" cy="408" r="19"/>
                    <circle cx="811" cy="410" r="20" fill="#cbccd6"/>
                </g>
                <!-- triad -->
                <path d="M152 632L148 612" stroke="#1b6e2a" stroke-width="3"/><path d="M145 606L152 614L144 617z" fill="#12521c"/>
                <path d="M156 633L176 631" stroke="#c4323c" stroke-width="3"/><path d="M183 629L173 626L175 635z" fill="#a81c28"/>
                <circle cx="155" cy="633" r="4.500" fill="#1b1f9a"/>
                <path d="M141 597L144.500 601.500L148 597M144.500 601.500V606" stroke="#33603a"/>
                <path d="M182 622L187 631M187 622L182 631" stroke="#cf4450"/>
                <g class="font-['Liberation_Serif','Noto_Sans_CJK_SC',serif]">
                    <g fill="#3f404a">
                        <text class="text-[55px]" x="412" y="384">莫西网</text>
                        <text class="text-[53px]" x="579" y="384">www.3dmox.com</text>
                    </g>
                    <g fill="#d6d7dd">
                        <text class="text-[55px]" x="410" y="382">莫西网</text>
                        <text class="text-[53px]" x="577" y="382">www.3dmox.com</text>
                    </g>
                </g>
            </svg>

            <div class="absolute top-[5px] left-[448px] flex items-center text-[#666]" id="hud"></div>

            <button class="absolute top-[232px] left-0 h-[39px] w-[7px] border-y border-r border-[#777] bg-[#f7f7f7]" aria-label="Show panel"><span class="block size-[6px] rounded-full border border-[#777]"></span></button>

            <div class="absolute top-[29px] right-0 flex w-[26px] flex-col border-t border-l border-[#888] bg-[#d0d0d0]" id="taskpane"></div>
        </div>

        <!-- document tabs -->
        <div class="flex h-4 shrink-0 border-b border-[#888] bg-[#f9f9f9] text-center leading-[14px] text-black">
            <div class="ml-[26px] flex w-[65px] divide-x divide-[#888] border-t border-[#333] bg-[#a8a8a8] text-[#888] [&>button]:flex-1 [&>button]:text-[8px]">
                <button aria-label="First tab">|◀</button><button aria-label="Previous tab">◀</button><button aria-label="Next tab">▶</button><button aria-label="Last tab">▶|</button>
            </div>
            <a class="w-[57px] border-r border-[#888] pl-[2px] font-['Liberation_Sans',sans-serif] text-[12px] font-bold" href="#">Model</a>
            <a class="w-[68px] border-r border-[#888] bg-[#d0d0d0]" href="#">3D Views</a>
            <a class="w-[108px] border-r border-[#888] bg-[#d0d0d0] pr-2" href="#">Motion Study 1</a>
        </div>
    </div>
</main>

<footer class="flex h-[18px] shrink-0 items-center pl-px text-black">
    <span class="flex-1">SOLIDWORKS Premium 2017 x64 Edition</span>
    <span class="h-full border-r border-[#ddd] pr-2 leading-[18px]">Under Defined</span>
    <span class="ml-[5px] h-full border-x border-[#ddd] px-[6px] leading-[18px]">Editing Assembly</span>
    <button class="ml-4 flex h-full w-[158px] items-center gap-[18px] border-l border-[#ddd] pl-[31px]">MMGS<svg class="size-2"><use href="#up"/></svg></button>
    <button class="mr-1" aria-label="Tags"><svg class="size-4 fill-none"><use href="#tag"/></svg></button>
</footer>
<div class="flex h-[2px] shrink-0 bg-black"><span class="ml-12 w-[344px] bg-[#e8e8e8]"></span></div>

<script>
    function icon(id, size) {
        return `<svg class="${size} fill-none stroke-current"><use href="#${id}"/></svg>`
    }
    const arrow = '<svg class="size-2"><use href="#down"/></svg>'

    // items: [icon, greyed out, has a drop-down], '-' is a separator
    function sideBar(el, items) {
        let html = '<div class="mx-1 mb-[9px] h-1 border-b-2 border-dotted border-[#999]"></div>'
        for (const item of items) {
            if (item === '-') {
                html += '<div class="mx-[5px] h-2 pt-[2px]"><hr class="border-[#777]"></div>'
                continue
            }
            const [id, off, menu] = item
            html += `<div class="flex h-[26px] items-center gap-[9px] pl-[7px] ${off ? 'text-[#b0b0b0]' : 'text-[#222]'}">
                <button aria-label="${id}">${icon(id, 'size-[18px]')}</button>
                ${menu ? `<button aria-label="${id} menu">${arrow}</button>` : ''}</div>`
        }
        document.getElementById(el).innerHTML = html
    }

    sideBar('features', [['boxround', 1, 1], ['cutbox', 0, 1], '-', ['filletbox', 0, 1], ['rib', 1], ['draft', 1], ['shell', 1],
        ['wizard', 0], ['pattern', 1, 1], ['plane', 0, 1], ['curve', 0, 1], ['instant', 0]])
    sideBar('surfaces', [['sheet', 1], ['tube', 1], ['dome', 1], ['bend', 1], ['loft', 1], ['zip', 1], '-', ['wheel', 1], ['swirl', 1],
        ['knot', 1], '-', ['hex', 1], ['shell', 1], ['draft', 1], ['halves', 1], '-', ['folder', 1], ['globe', 1], ['press', 1],
        ['disc', 1], ['spring', 1], ['boxround', 1]])
    sideBar('views', [['cubeA', 1], ['cubeB', 1], ['cubeC', 1], ['cubeB', 1], ['cubeB', 1], ['cubeC', 1], ['cubeD', 1], '-',
        ['sk1', 1], ['sk2', 1], ['sk3', 1], '-', ['sk4', 1], ['sk5', 1]])

    // quick access toolbar
    document.getElementById('quick').innerHTML =
        ['new', 'open', 'save', 'print', 'undo'].map(id => `<button class="w-[27px] pl-1" aria-label="${id}">${icon(id, 'mx-auto size-5')}</button>
            <button class="w-3 ${id === 'undo' ? 'text-[#bbb]' : 'text-[#333]'}" aria-label="${id} menu"><svg class="ml-1 size-2"><use href="#down"/></svg></button>`).join('') +
        `<button class="ml-1 h-[26px] w-[26px] border border-[#888] bg-[#b9b9b9]" aria-label="select">${icon('cursor', 'mx-auto size-5')}</button>
         <button class="h-[26px] w-[13px] border border-l-0 border-[#aaa]" aria-label="select menu"><svg class="mx-auto size-2"><use href="#down"/></svg></button>` +
        ['traffic', 'list', 'gear'].map(id => `<button class="w-[25px]" aria-label="${id}">${icon(id, 'mx-auto size-[18px]')}</button>`).join('') +
        `<button class="w-3 pl-1" aria-label="options menu">${arrow}</button>`

    // sketch tools
    document.getElementById('sketch').innerHTML = [['line', 1], ['circle', 1], ['spline', 1], ['grid', 0], ['rect', 1], ['arc', 1],
        ['ellipse', 1], ['sketchtext', 0], ['slot', 1], ['polygon', 0], ['fillet', 1], ['point', 0]].map(([id, menu]) =>
        `<div class="flex h-[26px] items-center gap-[5px] pt-[2px] ${id === 'fillet' ? 'text-[#999]' : ''}"><button aria-label="${id}">${icon(id, 'size-5')}</button>
            ${menu ? `<button aria-label="${id} menu">${arrow}</button>` : ''}</div>`).join('')

    // heads-up view toolbar
    document.getElementById('hud').innerHTML = [['zoomfit', 0], ['zoomarea', 0], ['prev', 0], ['section', 0], ['dynview', 0],
        ['orient', 1], ['display', 1], ['eye', 1], ['appearance', 0], ['scene', 1], ['monitor', 1]].map(([id, menu]) =>
        `<button class="mr-[6px]" aria-label="${id}">${icon(id, 'size-5')}</button>
            ${menu ? `<button class="-ml-[1px] mr-2" aria-label="${id} menu"><svg class="size-[7px]"><use href="#down"/></svg></button>` : ''}`).join('')

    // task pane
    document.getElementById('taskpane').innerHTML = ['home', 'library', 'explorer', 'palette', 'ball', 'props', 'forum', 'costing', 'routing']
        .map(id => `<button class="h-6 border-b border-[#888] ${id === 'library' ? 'bg-[#f7f7f7]' : ''}" aria-label="${id}">${icon(id, 'mx-auto size-[19px]')}</button>`).join('')
</script>
</body>
</html>
